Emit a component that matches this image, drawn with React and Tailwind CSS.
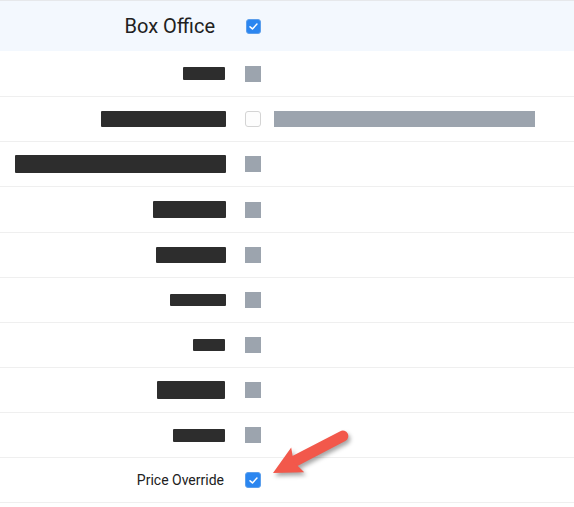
import React from 'react';

const rows = [
    { bar: 42, h: 13, end: 1, rowH: 'h-[46px]' },
    { bar: 125, h: 16, empty: true, wide: true },
    { bar: 211, h: 18 },
    { bar: 73, h: 17, rowH: 'h-[46px]' },
    { bar: 70, h: 16 },
    { bar: 56, h: 12 },
    { bar: 32, h: 12, end: 1 },
    { bar: 68, h: 18, end: 1 },
    { bar: 52, h: 13, end: 1 },
];

const Checked = ({ size = 'w-[16px] h-[16px]' }) => (
    <div className={`${size} rounded-[3px] bg-[#2b86f0] border border-[#5c9fec] flex items-center justify-center`}>
        <svg viewBox="0 0 16 16" className="w-[11px] h-[11px]" fill="none" stroke="white" strokeWidth="2.2" strokeLinecap="round" strokeLinejoin="round">
            <polyline points="3,8.5 6.5,11.5 13,4.5" />
        </svg>
    </div>
);

const Row = ({ row }) => (
    <div className={`${row.rowH || 'h-[45px]'} border-b border-[#efefef] flex items-center`}>
        <div className="w-[226px] flex justify-end">
            <div
                className="bg-[#2d2d2d] rounded-[1px]"
                style={{ width: row.bar, height: row.h, marginRight: row.end || 0 }}
            />
        </div>
        <div className="ml-[19px]">
            {row.empty ? (
                <div className="w-[16px] h-[16px] rounded-[3px] bg-[#fdfdfd] border border-[#d4d4d4]" />
            ) : (
                <div className="w-[16px] h-[16px] bg-[#9ca4ae]" />
            )}
        </div>
        {row.wide && <div className="ml-[13px] w-[261px] h-[16px] bg-[#9ca4ae]" />}
    </div>
);

export default function App() {
    return (
        <div className="relative w-[574px] h-[507px] bg-white overflow-hidden font-['Roboto',sans-serif] text-[#212121]">
            <div className="border-t border-[#e6e8eb]">
                {/* header */}
                <div className="h-[50px] bg-[#f3f8fe] flex items-center">
                    <div className="w-[226px] flex justify-end pr-[11px] text-[20px] leading-none">
                        Box Office
                    </div>
                    <div className="ml-[20px]">
                        <Checked size="w-[15px] h-[15px]" />
                    </div>
                </div>

                {rows.map((row, i) => (
                    <Row key={i} row={row} />
                ))}

                <div className="h-[45px] border-b border-[#efefef] flex items-center">
                    <div className="w-[226px] flex justify-end pr-[2px] text-[14px] leading-none">
                        Price Override
                    </div>
                    <div className="ml-[19px]">
                        <Checked />
                    </div>
                </div>
            </div>

            {/* callout arrow */}
            <svg
                className="absolute left-[262px] top-[422px] w-[95px] h-[62px] overflow-visible drop-shadow-[2px_3px_2px_rgba(0,0,0,0.35)]"
                viewBox="0 0 95 62"
            >
                <line x1="31" y1="40" x2="80.8" y2="14.1" stroke="#f2584b" strokeWidth="11" strokeLinecap="round" />
                <path d="M11 51 L29.2 25.5 Q31 36 31.6 40 Q36 44 42.2 50.3 Z" fill="#f2584b" />
            </svg>
        </div>
    );
}
